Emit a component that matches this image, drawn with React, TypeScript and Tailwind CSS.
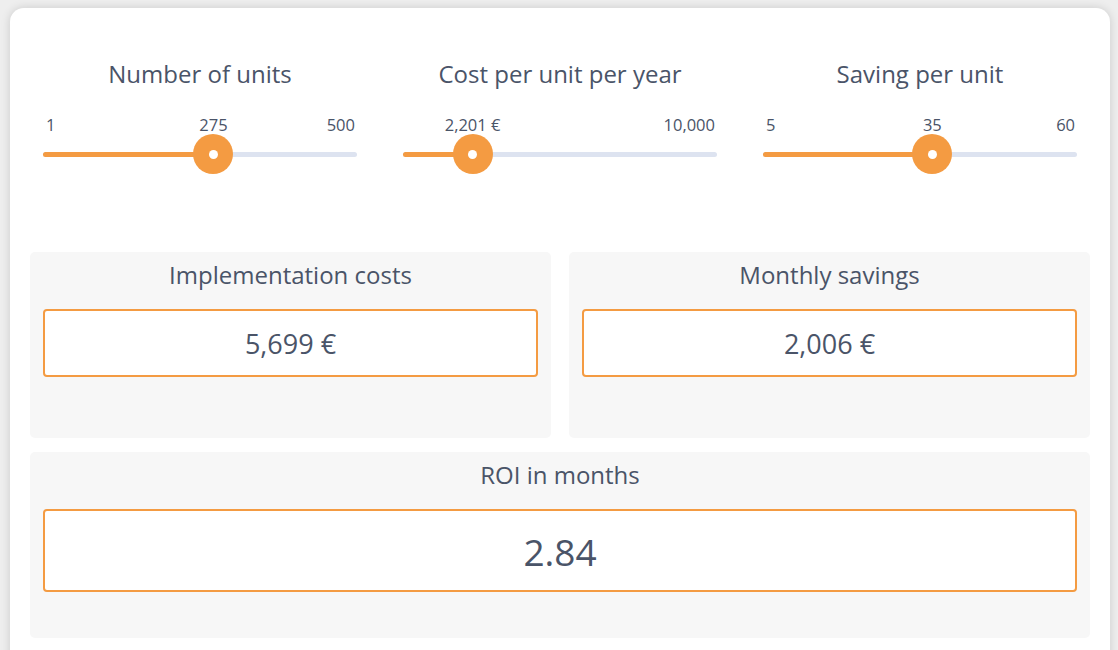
import React from "react";

type SliderProps = {
  title: string;
  min: string;
  max: string;
  value: string;
  pct: number;
};

function Slider({ title, min, max, value, pct }: SliderProps) {
  // thumb is 40px wide, centre moves over (track width - 40px)
  const left = `calc(20px + (100% - 40px) * ${pct})`;
  return (
    <div className="flex flex-col items-center">
      <h2 className="text-[24px] leading-none mt-[54px] mb-[28px]">{title}</h2>
      <div className="relative w-full px-[13px]">
        <div className="relative h-[22px] text-[16.5px] leading-none">
          <span className="absolute left-[3px] top-[3px]">{min}</span>
          <span
            className="absolute top-[3px] -translate-x-1/2 whitespace-nowrap"
            style={{ left }}
          >
            {value}
          </span>
          <span className="absolute right-[2px] top-[3px]">{max}</span>
        </div>
        <div className="relative h-[40px] -mt-[2px]">
          <div className="absolute inset-x-0 top-[18px] h-[5px] rounded-full bg-[#dde3f0]" />
          <div
            className="absolute left-0 top-[18px] h-[5px] rounded-full bg-[#f49b42]"
            style={{ width: left }}
          />
          <div
            className="absolute top-0 -translate-x-1/2 size-[40px] rounded-full bg-[#f49b42] flex items-center justify-center"
            style={{ left }}
          >
            <div className="size-[9px] rounded-full bg-white" />
          </div>
        </div>
      </div>
    </div>
  );
}

function ResultBox({ title, value, big }: { title: string; value: string; big?: boolean }) {
  return (
    <div className="bg-[#f7f7f7] rounded-[5px] px-[13px] pt-[10px] h-[186px]">
      <h3 className="text-[24px] leading-[26px] text-center">{title}</h3>
      <div
        className={
          big
            ? "mt-[21px] h-[83px] bg-white border-2 border-[#f49b42] rounded-[4px] flex items-center justify-center text-[37px] pt-[2px]"
            : "mt-[21px] h-[68px] bg-white border-2 border-[#f49b42] rounded-[4px] flex items-center justify-center text-[27px] pt-[2px]"
        }
      >
        {value}
      </div>
    </div>
  );
}

export default function App() {
  return (
    <div
      className="min-h-screen bg-[#eeeeee] pt-[8px] overflow-hidden"
      style={{ fontFamily: '"Open Sans", "Noto Sans", sans-serif' }}
    >
      <div className="ml-[10px] mr-[8px] bg-white rounded-t-[14px] shadow-[0_0_10px_rgba(0,0,0,0.15)] px-[20px] pb-[40px] text-[#4a5468]">
        <div className="grid grid-cols-3 gap-[20px]">
          <Slider title="Number of units" min="1" max="500" value="275" pct={0.549} />
          <Slider title="Cost per unit per year" min="" max="10,000" value="2,201 €" pct={0.181} />
          <Slider title="Saving per unit" min="5" max="60" value="35" pct={0.545} />
        </div>
        <div className="mt-[78px] grid grid-cols-2 gap-x-[18px] gap-y-[14px]">
          <ResultBox title="Implementation costs" value="5,699 €" />
          <ResultBox title="Monthly savings" value="2,006 €" />
          <div className="col-span-2">
            <ResultBox title="ROI in months" value="2.84" big />
          </div>
        </div>
      </div>
    </div>
  );
}
